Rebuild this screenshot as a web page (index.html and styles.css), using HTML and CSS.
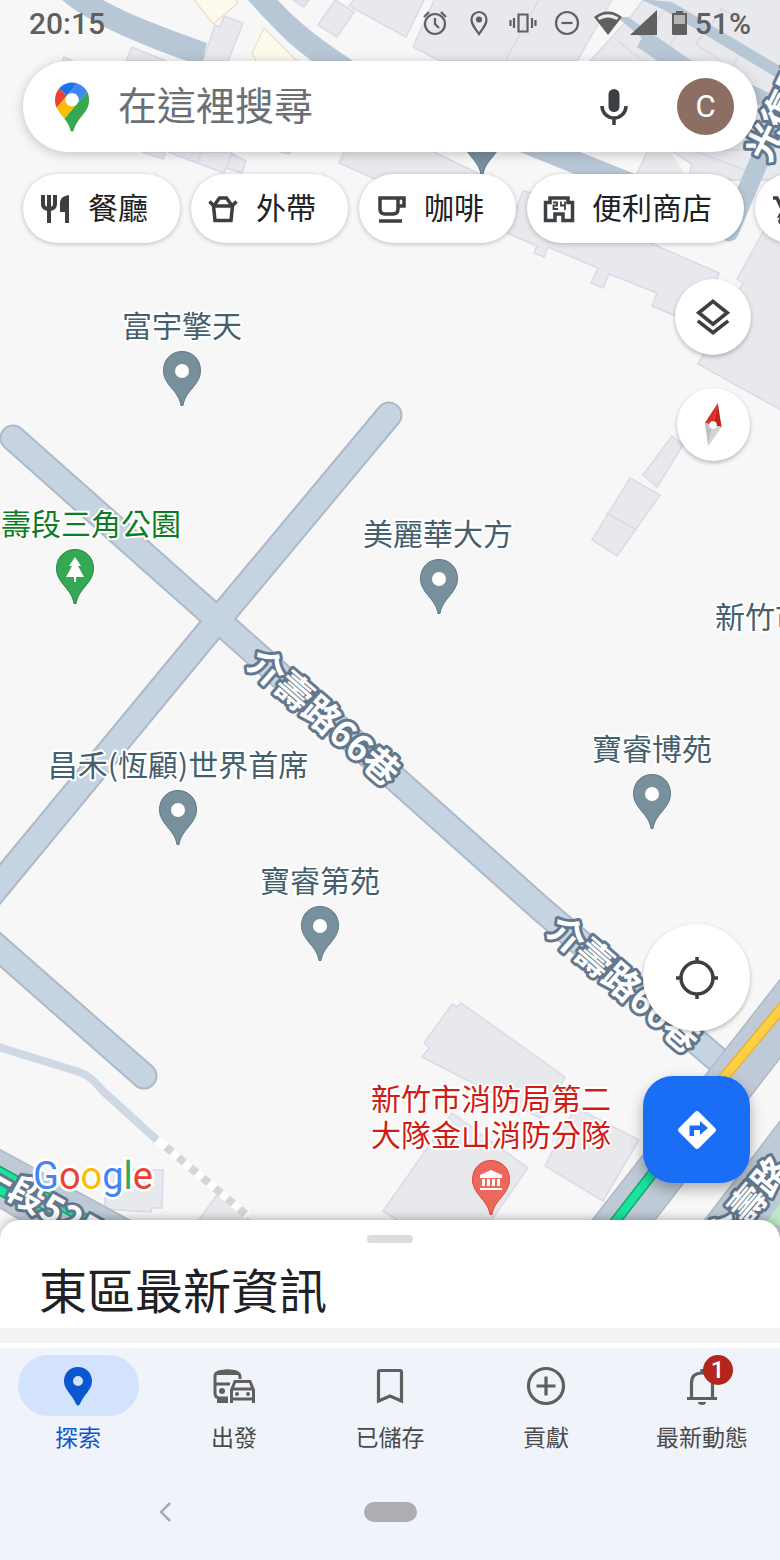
FILE: index.html
```html
<!DOCTYPE html>
<html lang="zh-Hant">
<head>
    <meta charset="UTF-8">
    <meta name="viewport" content="width=device-width, initial-scale=1">
    <title>Google 地圖</title>
    <link rel="stylesheet" href="styles.css">
</head>
<body>
    <main class="stage">
        <!-- Map canvas -->
        <svg class="map" viewBox="0 0 780 1240" preserveAspectRatio="xMidYMin slice" role="img" aria-label="地圖">
            <defs>
                <path id="pin" d="M0-19.500C-11-19.500-18.500-11-18.500-.5C-18.500 6-15.500 11-10.500 17C-5 23.500-2 28-1 34.500H1C2 28 5 23.500 10.500 17C15.500 11 18.500 6 18.500-.5C18.500-11 11-19.500 0-19.500Z"/>
                <g id="place">
                    <use href="#pin" class="pin-gray"/>
                    <circle r="7" fill="#fff"/>
                </g>
            </defs>

            <!-- Buildings -->
            <g class="building">
                <path d="M126 61L132 47L166 61ZM62 61L64 57L73 61Z"/>
                <path d="M203 61L215 25L220 27L224 16L243 23L228 61Z"/>
                <path d="M293 0L304 7L309 0ZM318 25L335 0L354 12L337 37Z"/>
                <path d="M355-2L349 6L406 37L425-2Z"/>
                <path d="M435-2L413 47L440 61H577L613-2ZM540-2L505 61"/>
                <path d="M590 61L632 15L645-2H790V180H720L700 61Z"/>
                <path d="M142 152L163 159L166 152ZM168 152L224 173L232 152ZM232 154L246 161L242 173L226 168ZM201 152L197 162M280 152L289 154L291 152Z"/>
                <path d="M345 150L339 163L375 179H490L430 150Z"/>
                <path d="M648 150L634 180H745L756 150ZM670 150L692 164L688 180M692 150L745 170"/>
                <path d="M528 192L523 191L507 233L537 246L534 253L544 257L548 247L598 268L591 283L603 288L609 274L657 293L652 306L690 322L714 290L719 273L648 242L560 200Z"/>
                <path d="M790 185L763 232L737 279L743 283L698 364L790 415Z"/>
                <path d="M643 475L672 436L683 445L657 487ZM592 540L630 478L660 495L617 556ZM606 513L637 530"/>
                <path d="M452 1004L457 1007L461 1003L565 1077L562 1083L540 1118L422 1057L429 1048L424 1043Z"/>
                <path d="M383 1211L452 1113L528 1168L488 1225H405Z"/>
                <path d="M575 1107L639 1140L603 1201L545 1166Z"/>
                <path d="M108 1170H163L162 1208H152L151 1212L104 1209Z"/>
                <path d="M195 1225L217 1195L256 1225Z"/>
                <path d="M666 8L640 44M690 14L664 54M722 10L696 44L740 74M742 50L725 80M618 41L640 58M720 8L742 20"/>
            </g>
            <g class="building-shop">
                <path d="M193-2L213 24L238 3L235-2ZM264 28L252 53L257 63H299Z"/>
            </g>

            <!-- Streets behind the search bar -->
            <g class="street">
                <path d="M61-1C90 25 150 48 187 61H203L207 43C160 26 130 15 101-1Z"/>
                <path d="M247-1C275 30 290 45 312 61H353C325 42 300 25 277-1Z"/>
                <path d="M640-1L672 2L790 72V86L664 10Z"/>
                <path d="M617 17H628L692 61H658L637 47L642 38Z"/>
                <path d="M510 148L577 175L640 176L570 148Z"/>
                <path d="M752 85L780 98V112L756 104Z"/>
            </g>
            <path d="M780 112L729 232" fill="none" stroke="#b8c7d6" stroke-width="19" stroke-linecap="round"/>

            <!-- Footpath -->
            <path class="footpath" d="M-5 1046L76 1071C92 1076 96 1084 104 1092L157 1140"/>
            <path class="steps-base" d="M157 1140L248 1216"/>
            <path class="steps" d="M166 1147L248 1216"/>

            <!-- Lanes: edges first, then fills so crossings join -->
            <g class="lane-edge">
                <path d="M13 438L218 620L540 908L725 1066"/>
                <path d="M389 415L218 620L-24 913"/>
                <path d="M-20 932L144 1076"/>
            </g>
            <g class="lane">
                <path d="M13 438L218 620L540 908L725 1066"/>
                <path d="M389 415L218 620L-24 913"/>
                <path d="M-20 932L144 1076"/>
            </g>

            <!-- Main roads -->
            <g class="road">
                <path d="M-5 1147L135 1223V1245H62L-5 1205Z"/>
                <path d="M575 1242L790 967V1045L638 1242Z"/>
                <path d="M688 1242L790 1108V1242Z"/>
            </g>
            <path d="M764 1225L790 1191V1225Z" fill="#b9eac6"/>
            <path class="traffic-edge" d="M-5 1169L100 1227M-5 1187L70 1230"/>
            <path class="traffic" d="M-5 1169L100 1227M-5 1187L70 1230"/>
            <path class="traffic-edge" d="M604 1236L697 1116"/>
            <path class="traffic" d="M604 1236L697 1116"/>
            <path class="traffic-edge slow" d="M700 1106L790 998"/>
            <path class="traffic slow" d="M700 1106L790 998"/>

            <!-- Road names -->
            <g class="road-name">
                <text transform="translate(324 717) rotate(41)" dy="13" text-anchor="middle">介壽路66巷</text>
                <text transform="translate(624 984) rotate(41)" dy="13" text-anchor="middle">介壽路66巷</text>
                <text transform="translate(757 158) rotate(-64)" dy="13">光復路</text>
                <text transform="translate(-20 1169) rotate(29)" dy="13">一段525巷</text>
                <text transform="translate(713 1245) rotate(-50)" dy="13">介壽路</text>
            </g>

            <!-- Places -->
            <g class="place-name">
                <text x="182" y="337">富宇擎天</text>
                <text x="438" y="545">美麗華大方</text>
                <text x="652" y="760">寶睿博苑</text>
                <text x="178" y="776">昌禾(恆顧)世界首席</text>
                <text x="320" y="892">寶睿第苑</text>
                <text x="760" y="628">新竹市</text>
                <text x="91" y="535" class="park">壽段三角公園</text>
                <text y="1110" class="station"><tspan x="491">新竹市消防局第二</tspan><tspan x="491" dy="36">大隊金山消防分隊</tspan></text>
            </g>
            <use href="#place" x="182" y="371"/>
            <use href="#place" x="439" y="579"/>
            <use href="#place" x="652" y="794"/>
            <use href="#place" x="178" y="810"/>
            <use href="#place" x="320" y="926"/>
            <use href="#place" x="482" y="140"/>
            <g transform="translate(75 569)">
                <use href="#pin" class="pin-green"/>
                <path d="M0-12L6-3H3L9 8H1V13H-1V8H-9L-3-3H-6Z" fill="#fff"/>
            </g>
            <g transform="translate(491 1180)">
                <use href="#pin" class="pin-red"/>
                <path d="M0-10L11-5V-2H-11V-5ZM-9-1H-6V6H-9ZM-4-1H-1V6H-4ZM1-1H4V6H1ZM6-1H9V6H6ZM-11 8H11V10H-11Z" fill="#fff"/>
            </g>
        </svg>

        <div class="overlay">
            <!-- Status bar -->
            <header class="status">
                <span class="clock">20:15</span>
                <div class="status-group notices">
                    <svg viewBox="0 0 30 30" class="line"><circle cx="15" cy="16" r="10"/><path d="M15 10V16L19 20M4 9L9 4M26 9L21 4"/></svg>
                    <svg viewBox="0 0 30 30" class="line"><path d="M15 26C10 19 7.500 16 7.500 11.500A7.500 7.500 0 0 1 22.500 11.500C22.500 16 20 19 15 26Z"/><circle cx="15" cy="11.500" r="2" fill="#606060"/></svg>
                    <svg viewBox="0 0 30 30" class="line"><path d="M10.500 6.500H19.500V23.500H10.500ZM6 10V20M24 10V20M2.500 12V18M27.500 12V18"/></svg>
                    <svg viewBox="0 0 30 30" class="line"><circle cx="15" cy="15" r="11"/><path d="M9.500 15H20.500"/></svg>
                </div>
                <div class="status-group">
                    <svg viewBox="0 0 30 30"><path d="M15 27L1 9C9 1.500 21 1.500 29 9Z" fill="#606060"/><path d="M4.500 9.500C11 5 19 5 25.500 9.500L23.500 12C18 8.500 12 8.500 6.500 12Z" fill="#eee"/></svg>
                    <svg viewBox="0 0 30 30"><path d="M1 27H28V2Z" fill="#606060"/></svg>
                    <svg viewBox="0 0 30 30"><path d="M11 3H18V5H21Q22 5 22 6V26Q22 27 21 27H8Q7 27 7 26V6Q7 5 8 5H11Z" fill="#606060"/><path d="M9 7H20V16H9Z" fill="#b5b5b5"/></svg>
                    <span class="percent">51%</span>
                </div>
            </header>

            <!-- Search -->
            <form class="search" role="search">
                <svg class="maps-logo" viewBox="0 0 92 132">
                    <path fill="#1a73e8" d="M60.200 2.200C55.800.8 51 0 46.100 0 32 0 19.300 6.400 10.800 16.500l21.800 18.300L60.200 2.200z"/>
                    <path fill="#ea4335" d="M10.800 16.500C4.100 24.500 0 34.900 0 46.100c0 8.700 1.700 15.700 4.600 22l28-33.300-21.800-18.300z"/>
                    <path fill="#4285f4" d="M46.200 28.500c9.800 0 17.700 7.900 17.700 17.700 0 4.300-1.600 8.300-4.200 11.400 0 0 13.900-16.600 27.500-32.700-5.600-10.800-15.300-19-27-22.700L32.600 34.800c3.300-3.800 8.100-6.300 13.600-6.300"/>
                    <path fill="#fbbc04" d="M46.200 63.800c-9.800 0-17.700-7.900-17.700-17.700 0-4.300 1.500-8.300 4.100-11.300l-28 33.300c4.800 10.600 12.800 19.200 21 29.900l34.100-40.500c-3.300 3.900-8.100 6.300-13.500 6.300"/>
                    <path fill="#34a853" d="M59.100 109.200c15.400-24.100 33.300-35 33.300-63 0-7.700-1.900-14.900-5.200-21.300L25.600 98c2.600 3.400 5.300 7.300 7.900 11.300 9.400 14.500 6.800 23.100 12.800 23.100s3.400-8.700 12.800-23.200"/>
                    <circle cx="46.200" cy="46.200" r="17.700" fill="#fff"/>
                </svg>
                <input class="search-input" type="text" placeholder="在這裡搜尋" aria-label="在這裡搜尋">
                <button class="mic" type="button" aria-label="語音搜尋">
                    <svg viewBox="0 0 36 36"><rect x="12.500" y="0" width="11" height="23" rx="5.500" fill="#3c4043"/><path d="M6 17A12 12 0 0 0 30 17M18 28V36" fill="none" stroke="#3c4043" stroke-width="3.500"/></svg>
                </button>
                <button class="avatar" type="button" aria-label="帳戶">C</button>
            </form>

            <!-- Category chips -->
            <nav class="chips" aria-label="類別">
                <button class="chip" type="button">
                    <svg viewBox="0 0 36 36"><path d="M6 4V13Q6 18 12 18Q18 18 18 13V4M12 4V32" fill="none" stroke="#3c4043" stroke-width="4"/><path d="M32 4V32H28V21H23V12Q23 5 32 4Z" fill="#3c4043"/></svg>
                    <span class="label">餐廳</span>
                </button>
                <button class="chip" type="button">
                    <svg viewBox="0 0 36 36" class="dark"><path d="M8.500 15H27.500L26 29.500H10ZM4.500 10.500L9 15M31.500 10.500L27 15M9.500 14L14.500 7H21.500L26.500 14"/></svg>
                    <span class="label">外帶</span>
                </button>
                <button class="chip" type="button">
                    <svg viewBox="0 0 36 36" class="dark"><path d="M7 7H25V18Q25 23 20 23H12Q7 23 7 18ZM25 7H31V15H25M6 30H29"/></svg>
                    <span class="label">咖啡</span>
                </button>
                <button class="chip" type="button">
                    <svg viewBox="0 0 36 36" class="dark"><path d="M4.500 29.500V11.500H9V7H27V11.500H31.500V29.500H22V23H14V29.500Z"/><path d="M12 11.500H16V14.500H12.500V18H17M20 10.500V14.500H24M24 10.500V19" stroke-width="1.800"/></svg>
                    <span class="label">便利商店</span>
                </button>
                <button class="chip" type="button">
                    <svg viewBox="0 0 36 36" class="dark"><path d="M4 7H8L14 20H26L32 9M14 20L11 25H29"/><circle cx="13" cy="30" r="2"/><circle cx="27" cy="30" r="2"/></svg>
                    <span class="label">購物</span>
                </button>
            </nav>

            <!-- Map controls -->
            <div class="top-controls">
                <button class="round layers" type="button" aria-label="圖層">
                    <svg viewBox="0 0 40 40" class="dark"><path d="M20 3.500L35 15.500L20 27.500L5 15.500ZM4 24L20 36.500L36 24" stroke-width="3.800"/></svg>
                </button>
                <button class="round compass" type="button" aria-label="指南針">
                    <svg viewBox="0 0 48 48">
                        <path d="M29 1L15.500 22L24 24Z" fill="#d93025"/><path d="M29 1L33 26L24 24Z" fill="#c5221f"/>
                        <path d="M15.500 22L24 24L19 46Z" fill="#bdc1c6"/><path d="M24 24L33 26L19 46Z" fill="#d2d4d8"/>
                        <circle cx="24" cy="24" r="4" fill="#fff"/>
                    </svg>
                </button>
            </div>

            <div class="bottom-controls">
                <a class="google" href="#" aria-label="Google"><span class="b">G</span><span class="r">o</span><span class="y">o</span><span class="b">g</span><span class="g">l</span><span class="r">e</span></a>
                <div class="actions">
                    <button class="round locate" type="button" aria-label="我的位置">
                        <svg viewBox="0 0 44 44" class="dark"><circle cx="22" cy="22" r="16"/><path d="M22 1V6M22 38V43M1 22H6M38 22H43"/></svg>
                    </button>
                    <button class="directions" type="button" aria-label="路線">
                        <svg viewBox="0 0 40 40"><path d="M18 2Q20 0 22 2L38 18Q40 20 38 22L22 38Q20 40 18 38L2 22Q0 20 2 18Z" fill="#fff"/><path d="M12.500 26V15.500H23V11L31 18L23 25V20H17V26Z" fill="#1a6ef5"/></svg>
                    </button>
                </div>
            </div>
        </div>
    </main>

    <!-- Bottom sheet -->
    <section class="sheet">
        <div class="handle"></div>
        <h1>東區最新資訊</h1>
        <div class="divider"></div>
    </section>

    <!-- Tabs -->
    <nav class="tabs" aria-label="主選單">
        <a class="tab active" href="#">
            <span class="tab-icon"><svg viewBox="0 0 44 44"><path fill-rule="evenodd" d="M22 3C14 3 8 9 8 17C8 26 16 30 20 40Q22 43 24 40C28 30 36 26 36 17C36 9 30 3 22 3ZM22 12A5 5 0 1 1 22 22A5 5 0 1 1 22 12Z" fill="#0b57d0"/></svg></span>
            探索
        </a>
        <a class="tab" href="#">
            <span class="tab-icon"><svg viewBox="0 0 44 44">
                <path d="M16 34H8Q3 34 3 29V12Q3 7 14 7H18Q28 7 28 13V15M3 20H18" fill="none" stroke="#5f5f5f" stroke-width="3"/>
                <path d="M5 8Q15 3 26 8V11H5ZM5 35H16V39H5Z" fill="#5f5f5f"/><circle cx="10" cy="27" r="3" fill="#5f5f5f"/>
                <path d="M19.500 39V26L23 17.500H38L41.500 26V39M19.500 35H41.500M20 25H41" fill="none" stroke="#5f5f5f" stroke-width="3"/>
                <circle cx="25" cy="30" r="2" fill="#5f5f5f"/><circle cx="36" cy="30" r="2" fill="#5f5f5f"/>
            </svg></span>
            出發
        </a>
        <a class="tab" href="#">
            <span class="tab-icon"><svg viewBox="0 0 44 44" class="tab-line"><path d="M10.500 37V8Q10.500 6.500 12 6.500H32Q33.500 6.500 33.500 8V37L22 32Z"/></svg></span>
            已儲存
        </a>
        <a class="tab" href="#">
            <span class="tab-icon"><svg viewBox="0 0 44 44" class="tab-line"><circle cx="22" cy="22" r="17.500"/><path d="M22 12.500V31.500M12.500 22H31.500"/></svg></span>
            貢獻
        </a>
        <a class="tab" href="#">
            <span class="tab-icon">
                <svg viewBox="0 0 44 44" class="tab-line"><path d="M7 34.500H37M11.500 34V19Q11.500 9 22 9Q32.500 9 32.500 19V34M22 5V9"/><path d="M18 38H26Q26 41 22 41Q18 41 18 38Z" fill="#5f5f5f" stroke="none"/></svg>
                <span class="badge">1</span>
            </span>
            最新動態
        </a>
    </nav>

    <!-- System navigation -->
    <footer class="system-nav">
        <button class="back" type="button" aria-label="返回"><svg viewBox="0 0 20 20"><path d="M15 1L6 10L15 19" fill="none" stroke="#a9abaf" stroke-width="2.500"/></svg></button>
        <button class="home" type="button" aria-label="主畫面"></button>
    </footer>
</body>
</html>
```
FILE: styles.css
```css
* {
    box-sizing: border-box;
}

body {
    display: flex;
    flex-direction: column;
    min-height: 100vh;
    margin: 0;
    overflow-x: hidden;
    font-family: "Noto Sans CJK TC", sans-serif;
    background-color: #f0f3f9;
    color: #202124;
}

button {
    padding: 0;
    border: none;
    background: none;
    font: inherit;
    color: inherit;
    cursor: pointer;
}

a {
    color: inherit;
    text-decoration: none;
}

svg {
    display: block;
}

/* Map and the controls on top share one grid cell */
.stage {
    display: grid;
    grid-template-columns: minmax(0, 1fr);
    flex: 1;
    background-color: #f7f7f7;
}

.map,
.overlay {
    grid-area: 1 / 1;
}

.map {
    width: 100%;
    height: 100%;
    min-height: 0;
}

.overlay {
    display: flex;
    flex-direction: column;
    z-index: 1;
}

/* Map drawing */
.building {
    fill: #e8e9ed;
    stroke: #dadae8;
    stroke-width: 1.5;
}

.building-shop {
    fill: #fef9ed;
    stroke: #ede3cf;
    stroke-width: 1.5;
}

.street {
    fill: #b8c7d6;
}

.footpath {
    fill: none;
    stroke: #cfd9e3;
    stroke-width: 8;
}

.steps-base {
    fill: none;
    stroke: #fff;
    stroke-width: 8;
}

.steps {
    fill: none;
    stroke: #d6d6d6;
    stroke-width: 8;
    stroke-dasharray: 8 8;
}

.lane-edge,
.lane {
    fill: none;
    stroke-linecap: round;
    stroke-linejoin: round;
}

.lane-edge {
    stroke: #adb9c8;
    stroke-width: 27;
}

.lane {
    stroke: #c6d4e1;
    stroke-width: 23;
}

.road {
    fill: #bfcad6;
    stroke: #adbac9;
    stroke-width: 1.5;
}

.traffic-edge {
    fill: none;
    stroke: #12a36c;
    stroke-width: 11;
}

.traffic {
    fill: none;
    stroke: #1ae39b;
    stroke-width: 8;
}

.traffic-edge.slow {
    stroke: #e5b33c;
}

.traffic.slow {
    stroke: #ffcf43;
}

.road-name text {
    font-size: 36px;
    font-weight: 700;
    fill: #fff;
    stroke: #63788f;
    stroke-width: 6;
    stroke-linejoin: round;
    paint-order: stroke;
}

.place-name text {
    font-size: 30px;
    text-anchor: middle;
    fill: #455f6e;
    stroke: #fff;
    stroke-width: 4;
    stroke-linejoin: round;
    paint-order: stroke;
}

.place-name .park {
    fill: #0b7d26;
}

.place-name .station {
    fill: #d01c14;
}

.pin-gray {
    fill: #78909c;
    stroke: #5a7886;
}

.pin-green {
    fill: #34a853;
    stroke: #1a8a3a;
}

.pin-red {
    fill: #ee675c;
    stroke: #e34034;
}

/* Status bar */
.status {
    display: flex;
    align-items: center;
    height: 48px;
    padding: 0 29px;
    font-family: Roboto, sans-serif;
    font-size: 30px;
    font-weight: 500;
    line-height: 48px;
    color: #5f5f5f;
}

.status-group {
    display: flex;
    align-items: center;
    gap: 6px;
}

.status-group svg {
    width: 30px;
    height: 30px;
    margin-bottom: 3px;
}

.notices {
    gap: 14px;
    margin-left: auto;
    margin-right: 11px;
}

.percent {
    margin-left: -6px;
}

.line {
    fill: none;
    stroke: #606060;
    stroke-width: 2.2;
}

.dark {
    fill: none;
    stroke: #3c4043;
    stroke-width: 3.5;
}

/* Search bar */
.search {
    display: flex;
    align-items: center;
    height: 91px;
    margin: 13px 23px 0;
    padding: 0 23px 0 32px;
    border-radius: 46px;
    background-color: #fff;
    box-shadow: 0 2px 12px rgba(0, 0, 0, 0.22);
}

.maps-logo {
    width: 34px;
    height: 50px;
    flex: none;
}

.search-input {
    flex: 1;
    min-width: 0;
    height: 68px;
    margin: 0 12px 0 29px;
    padding: 0 0 8px;
    border: none;
    outline: none;
    background: none;
    font-family: inherit;
    font-size: 39px;
    color: #202124;
}

.search-input::placeholder {
    color: #6b7075;
    opacity: 1;
}

.mic {
    flex: none;
    width: 36px;
    height: 36px;
    margin-right: 45px;
}

.avatar {
    flex: none;
    width: 57px;
    height: 57px;
    border-radius: 50%;
    background-color: #8d6e63;
    font-family: Roboto, sans-serif;
    font-size: 31px;
    color: #fff;
}

/* Chips */
.chips {
    display: flex;
    gap: 11px;
    padding: 22px 0 12px 23px;
    overflow: hidden;
}

.chip {
    display: flex;
    flex: none;
    align-items: center;
    gap: 15px;
    height: 69px;
    padding: 0 32px 0 14px;
    border-radius: 35px;
    background-color: #fff;
    box-shadow: 0 1px 5px rgba(0, 0, 0, 0.24);
    font-size: 30px;
    line-height: 36px;
}

.chip svg {
    width: 36px;
    height: 36px;
}

.label {
    padding-bottom: 6px;
}

/* Map controls */
.top-controls {
    display: flex;
    flex-direction: column;
    align-items: center;
    align-self: flex-end;
    gap: 33px;
    margin: 24px 29px 0 0;
}

.round {
    display: flex;
    align-items: center;
    justify-content: center;
    border-radius: 50%;
    background-color: #fff;
    box-shadow: 0 2px 4px rgba(0, 0, 0, 0.26);
}

.layers {
    width: 76px;
    height: 76px;
}

.layers svg {
    width: 38px;
    height: 38px;
}

.compass {
    width: 73px;
    height: 73px;
}

.compass svg {
    width: 46px;
    height: 46px;
}

.bottom-controls {
    display: flex;
    justify-content: space-between;
    align-items: flex-end;
    margin-top: auto;
    padding: 60px 30px 0 33px;
}

.actions {
    display: flex;
    flex-direction: column;
    gap: 45px;
    padding-bottom: 57px;
}

.locate {
    width: 107px;
    height: 107px;
}

.locate svg {
    width: 44px;
    height: 44px;
}

.directions {
    display: flex;
    align-items: center;
    justify-content: center;
    width: 107px;
    height: 107px;
    border-radius: 30px;
    background-color: #1a6ef5;
    box-shadow: 0 6px 14px rgba(0, 0, 0, 0.3);
}

.directions svg {
    width: 40px;
    height: 40px;
}

/* Google wordmark */
.google {
    padding-bottom: 48px;
    font-family: Roboto, sans-serif;
    font-size: 38px;
    line-height: 32px;
    -webkit-text-stroke: 5px #fff;
    paint-order: stroke fill;
}

.google .b {
    color: #4285f4;
}

.google .r {
    color: #ea4335;
}

.google .y {
    color: #fbbc05;
}

.google .g {
    color: #34a853;
}

/* Bottom sheet */
.sheet {
    z-index: 2;
    margin-top: -20px;
    padding: 15px 0 5px;
    border-radius: 20px 20px 0 0;
    background-color: #fff;
    box-shadow: 0 -2px 8px rgba(0, 0, 0, 0.25);
}

.handle {
    width: 46px;
    height: 8px;
    margin: 0 auto;
    border-radius: 4px;
    background-color: #dadce0;
}

.sheet h1 {
    margin: 9px 39px 4px;
    font-size: 48px;
    font-weight: 400;
    line-height: 72px;
}

.divider {
    height: 15px;
    background-color: #f1f3f4;
}

/* Tabs */
.tabs {
    z-index: 3;
    display: grid;
    grid-template-columns: repeat(5, 1fr);
    height: 115px;
    padding-top: 7px;
    background-color: #f0f3f9;
}

.tab {
    display: flex;
    flex-direction: column;
    align-items: center;
    gap: 4px;
    font-size: 23px;
    line-height: 32px;
    color: #4a4a4a;
}

.tab.active {
    color: #0b57d0;
}

.tab-icon {
    position: relative;
    display: flex;
    align-items: center;
    justify-content: center;
    width: 121px;
    height: 61px;
    border-radius: 31px;
}

.tab.active .tab-icon {
    background-color: #d3e3fd;
}

.tab-icon svg {
    width: 44px;
    height: 44px;
}

.tab-line {
    fill: none;
    stroke: #5f5f5f;
    stroke-width: 3.2;
}

.badge {
    position: absolute;
    top: 0;
    right: 30px;
    width: 30px;
    height: 30px;
    border-radius: 50%;
    background-color: #b3261e;
    font-family: Roboto, sans-serif;
    font-size: 24px;
    font-weight: 500;
    line-height: 30px;
    text-align: center;
    color: #fff;
}

/* System navigation */
.system-nav {
    display: grid;
    grid-template-columns: 1fr auto 1fr;
    align-items: center;
    height: 98px;
    background-color: #f0f3f9;
}

.back {
    justify-self: center;
    width: 20px;
    height: 20px;
    margin-right: 34px;
}

.home {
    width: 53px;
    height: 20px;
    border-radius: 10px;
    background-color: #adaeb2;
}
```
